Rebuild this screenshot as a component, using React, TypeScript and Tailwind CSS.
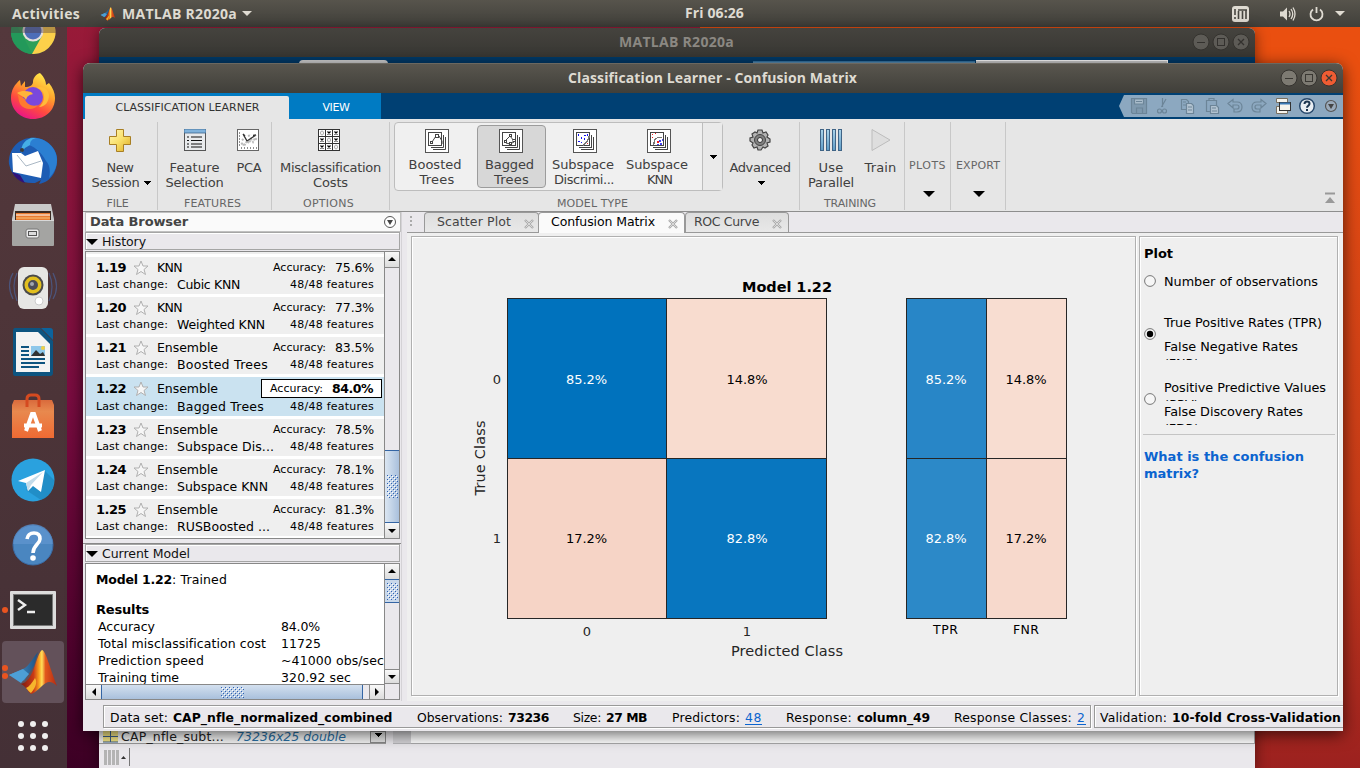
import React, { useLayoutEffect, useRef, useState } from "react";

/* Single-line label that tracks its letters so the run occupies w pixels. */
function T({ w, className = "", children }: { w: number; className?: string; children: string }) {
  const ref = useRef<HTMLSpanElement>(null);
  const [ls, setLs] = useState<number | null>(null);
  useLayoutEffect(() => {
    if (ref.current && ls === null) {
      setLs((w - ref.current.getBoundingClientRect().width) / children.length);
    }
  }, [w, children, ls]);
  return (
    <span ref={ref} className={`inline-block shrink-0 whitespace-pre ${className}`} style={{ letterSpacing: ls === null ? undefined : `${ls}px` }}>
      {children}
    </span>
  );
}

function Caret({ className = "" }: { className?: string }) {
  return (
    <svg className={className} width="8" height="4" viewBox="0 0 8 4" shapeRendering="crispEdges">
      <path d="M0 0h8L4 4z" fill="#000" />
    </svg>
  );
}

function BigCaret() {
  return (
    <svg width="12" height="6" viewBox="0 0 12 6">
      <path d="M0 0h12L6 6z" fill="#000" />
    </svg>
  );
}

function MatlabLogo({ className }: { className: string }) {
  return (
    <svg className={className} viewBox="0 0 48 46">
      <defs>
        <linearGradient id="mlb" x1="0" y1="0" x2="1" y2="0">
          <stop offset="0" stopColor="#4aa3dc" />
          <stop offset="1" stopColor="#1f4f80" />
        </linearGradient>
        <linearGradient id="mlo" x1="0" y1="0" x2="1" y2="0">
          <stop offset="0" stopColor="#7d1a10" />
          <stop offset=".35" stopColor="#c93a16" />
          <stop offset=".5" stopColor="#f9a01e" />
          <stop offset=".58" stopColor="#ffe05a" />
          <stop offset=".68" stopColor="#e2581c" />
          <stop offset="1" stopColor="#b12a14" />
        </linearGradient>
      </defs>
      <path d="M0 26 14 20c3-1 6-5 9-9 2-3 4-6 6-8l-4 14-10 15-3-3z" fill="url(#mlb)" />
      <path d="M0 26 14 20l6 5-8 9z" fill="#4d9fd6" />
      <path d="M12 35c6-1 10-8 13-16 3-8 5-16 8-18 4 1 7 16 15 36-4-4-8-5-11-3-5 3-10 10-15 11-3-2-5-8-10-10z" fill="url(#mlo)" />
      <path d="M17 39c3-1 6-5 9-10 2 3 2 8-4 15-2-1-3-3-5-5z" fill="#f6b52c" />
    </svg>
  );
}

/* ---------- Launcher ---------- */

function Dock() {
  return (
    <div className="flex h-[741px] w-[67px] flex-col items-center overflow-hidden bg-gradient-to-b from-[#54383c] via-[#4c3438] to-[#443036] pr-[2px]">
      <div className="-mt-[18px] h-[45px] w-[46px] shrink-0">
        <svg width="46" height="46" viewBox="0 0 46 46">
          <circle cx="23" cy="23" r="22" fill="#2c9f59" />
          <path d="M23 23 4 12a22 22 0 0 1 38 0z" fill="#b8403c" />
          <path d="M28 13h15A22 22 0 0 1 22 45l10-18z" fill="#fcd04a" />
          <path d="M4 12l10 17 8 16A22 22 0 0 1 4 12z" fill="#23995a" />
          <circle cx="23" cy="22" r="10.500" fill="#e6e0dc" />
          <circle cx="23" cy="22" r="8.500" fill="#4d6eb8" />
          <rect y="18" width="46" height="6" fill="#50383b" opacity=".4" />
        </svg>
      </div>
      <svg className="mt-[18px] shrink-0" width="46" height="48" viewBox="0 0 46 48">
        <defs>
          <linearGradient id="ffx" x1=".8" y1="0" x2=".3" y2="1">
            <stop offset="0" stopColor="#fff34f" />
            <stop offset=".4" stopColor="#ffa02c" />
            <stop offset=".7" stopColor="#ff4a40" />
            <stop offset="1" stopColor="#e8128a" />
          </linearGradient>
        </defs>
        <path d="M30 1c5 5 6 9 6 12l3-2c4 5 6 10 6 15 0 12-9 21-22 21S1 37 1 26C1 18 5 12 10 8l1 6 4-5v6c5 0 8-2 8-5 0-4 3-8 7-9z" fill="url(#ffx)" />
        <circle cx="23" cy="25" r="10" fill="#7a48dc" />
        <path d="M26 16c6 0 9 5 8 11-1 4-3 6-5 8 6 0 10-5 10-12-1-6-6-10-13-7z" fill="#ffc23a" opacity=".9" />
        <path d="M7 21c5-3 9-2 14-1l2 2c-4 1-6 2-7 6-1-3-5-4-9-7z" fill="#ffb43a" />
        <path d="M7 21c2 3 5 4 8 6 1 5 7 8 13 6-4 6-14 5-18-1-2-4-1-8-3-11z" fill="#ff7a2e" />
      </svg>
      <svg className="mt-[16px] shrink-0" width="50" height="50" viewBox="0 0 50 50">
        <path d="M1 28C0 15 9 3 22 2c13-2 25 7 27 19 1 14-6 25-18 27l2-4-6 3C14 48 4 42 1 28z" fill="#1e5db4" />
        <path d="M22 2c14-2 27 9 27 22 0 8-4 14-8 18 2-8 0-14-3-17C33 15 25 10 18 8z" fill="#2b7fd2" />
        <path d="M13 17C13 8 18 1 28 2c-4 1-6 3-6 7l-5 3z" fill="#45aee6" />
        <path d="m4 17 9 0 4 3 13-5 5 12-2 15L5 36z" fill="#fff" />
        <path d="m9 19 9 11 15-5" fill="none" stroke="#a9b7c4" strokeWidth="1" />
        <path d="M4 36c3 6 7 9 13 11l-5-8z" fill="#31127a" />
        <circle cx="14" cy="14" r="2" fill="#3b3b3b" />
      </svg>
      <svg className="mt-[16px] shrink-0" width="44" height="46" viewBox="0 0 44 46">
        <path d="M4 2h36l3 15v26H1V17z" fill="#c9c9c9" />
        <rect x="4" y="9" width="36" height="10" fill="#3a2a22" />
        <rect x="5" y="11" width="34" height="8" fill="#e87a30" />
        <path d="M5 13h34" stroke="#fff" />
        <path d="M5 16h34" stroke="#f7c37a" />
        <rect x="1" y="18" width="42" height="26" rx="1" fill="#a4a4a2" />
        <rect x="1" y="18" width="42" height="1" fill="#d8d8d8" />
        <rect x="15" y="27" width="13" height="9" rx="2" fill="#ececec" stroke="#777" />
        <rect x="17.500" y="29.500" width="8" height="4" fill="#ddd" stroke="#555" />
      </svg>
      <svg className="mt-[17px] shrink-0" width="50" height="46" viewBox="0 0 50 46">
        <g fill="none" stroke="#4b5d8c" strokeWidth="1.200" opacity=".8">
          <path d="M9 8Q3 20 9 36M5 8Q-2 20 5 34M41 8q6 14 0 28M45 8q7 14 0 26" />
        </g>
        <rect x="10" y="2" width="30" height="42" rx="6" fill="#e6e6e4" />
        <circle cx="25" cy="20" r="10.500" fill="#4a4a4a" />
        <circle cx="25" cy="20" r="8.500" fill="#e2bf1e" />
        <circle cx="25" cy="20" r="5" fill="#4d4d58" />
        <circle cx="24" cy="19" r="2" fill="#a2a7b0" />
        <circle cx="31" cy="36" r="4" fill="#fff" stroke="#ccc" />
      </svg>
      <svg className="mt-[16px] shrink-0" width="42" height="50" viewBox="0 0 42 50">
        <path d="M3 1h25l13 13v32q0 3-3 3H3q-2 0-2-3V4q0-3 2-3z" fill="#0d5480" />
        <path d="M29 1h9q3 0 3 3v9z" fill="#0c639c" />
        <path d="M4 5h22l12 12v28H4z" fill="#f3f3f3" />
        <path d="M9 20h8M9 24h8M9 28h8M9 32h24M9 36h24M9 40h18" stroke="#0d5480" strokeWidth="2" />
        <rect x="19" y="19" width="14" height="10" fill="#8ec7ea" />
        <path d="m19 29 5-6 4 4 3-2 2 4z" fill="#333" />
        <circle cx="31" cy="21" r="2" fill="#f0cf46" />
      </svg>
      <svg className="mt-[16px] shrink-0" width="44" height="46" viewBox="0 0 44 46">
        <defs>
          <linearGradient id="bag" x1="0" y1="0" x2="0" y2="1">
            <stop offset="0" stopColor="#d96a3c" />
            <stop offset=".3" stopColor="#e8894e" />
            <stop offset="1" stopColor="#ef6a33" />
          </linearGradient>
        </defs>
        <path d="M3 7h38l2 5v33H1V12z" fill="url(#bag)" />
        <path d="M16 14V6q0-4 4-4h4q4 0 4 4v8" fill="none" stroke="#d54a20" strokeWidth="3" />
        <path d="m15 38 6-17h2l6 17M13 32.500h18" fill="none" stroke="#fff" strokeWidth="4" />
      </svg>
      <svg className="mt-[19px] shrink-0" width="44" height="44" viewBox="0 0 44 44">
        <circle cx="22" cy="22" r="21.500" fill="#2aa1de" />
        <path d="M33 12 43 22q0 15-13 20L15 32z" fill="#1d82b8" opacity=".6" />
        <path d="m7 23 27-11-4 22-8-6-5 5-2-8z" fill="#fff" />
        <path d="m15 25 17-11-12 13-3 6z" fill="#c4dcea" />
      </svg>
      <svg className="mt-[22px] shrink-0" width="42" height="42" viewBox="0 0 42 42">
        <circle cx="21" cy="21" r="20" fill="#4a86c0" stroke="#3a6ba5" />
        <path d="M1 20a20 20 0 0 1 40 0z" fill="#6a9cd6" opacity=".5" />
        <path d="M15 15q1-6 7-6t6 6c0 5-7 6-7 14" fill="none" stroke="#fff" strokeWidth="3.600" />
        <circle cx="21" cy="34" r="2.800" fill="#fff" />
      </svg>
      <div className="mt-[25px] flex w-full shrink-0 items-center">
        <span className="ml-[2px] mr-[3px] h-[6px] w-[6px] rounded-full bg-[#e95420]" />
        <svg width="46" height="38" viewBox="0 0 46 38" className="ml-[-1px]">
          <rect width="46" height="38" rx="1" fill="#dcdcdc" />
          <rect x="3" y="3" width="40" height="32" fill="#787878" />
          <rect x="4" y="4" width="38" height="30" fill="#2b2b2b" />
          <path d="m8 9 7 5-7 5M17 21h8" fill="none" stroke="#eee" strokeWidth="2.400" />
        </svg>
      </div>
      <div className="mt-[12px] flex h-[62px] w-[62px] shrink-0 items-center rounded bg-[#63515a]">
        <div className="flex flex-col gap-[2px]">
          <span className="h-[6px] w-[6px] rounded-full bg-[#e95420]" />
          <span className="h-[6px] w-[6px] rounded-full bg-[#e95420]" />
        </div>
        <MatlabLogo className="ml-px h-[46px] w-[48px]" />
      </div>
      <div className="mt-[18px] grid shrink-0 grid-cols-3 gap-[6px]">
        {[0, 1, 2, 3, 4, 5, 6, 7, 8].map((i) => (
          <span key={i} className="h-[6px] w-[6px] rounded-full bg-[#f0eeee]" />
        ))}
      </div>
    </div>
  );
}

/* ---------- Window chrome ---------- */

function WinButtons({ active }: { active?: boolean }) {
  const face = active ? "#7d7a72" : "#5d5b56";
  const ink = active ? "#3a3833" : "#33312e";
  return (
    <svg width="58" height="18" viewBox="0 0 58 18">
      <circle cx="9" cy="9" r="8" fill={face} stroke="#35332f" />
      <path d="M5 9.500h8" stroke={ink} />
      <circle cx="29" cy="9" r="8" fill={face} stroke="#35332f" />
      <rect x="25.500" y="5.500" width="7" height="7" fill="none" stroke={ink} />
      <circle cx="49" cy="9" r="8" fill={active ? "#ee5c33" : face} stroke="#35332f" />
      <path d="m46 6 6 6M52 6l-6 6" stroke={ink} strokeWidth="1.300" />
    </svg>
  );
}

function TopBar() {
  return (
    <div className="flex h-[27px] items-center bg-gradient-to-b from-[#57544c] to-[#403f3a] font-['Open_Sans','Noto_Sans',sans-serif] text-[14px] font-bold text-[#dfdbd2]">
      <T w={68} className="ml-[12px]">Activities</T>
      <MatlabLogo className="ml-[20px] h-[14px] w-[16px]" />
      <T w={115} className="ml-[6px]">MATLAB R2020a</T>
      <svg className="ml-[5px]" width="10" height="5" viewBox="0 0 10 5"><path d="M0 0h10L5 5z" fill="#dfdbd2" /></svg>
      <T w={59} className="mb-[2px] ml-[433px]">Fri 06:26</T>
      <div className="ml-auto flex items-center pr-[15px]">
        <svg width="17" height="16" viewBox="0 0 17 16">
          <rect width="17" height="16" rx="3" fill="#dfdbd2" />
          <path d="M3 3v6M3 11v2M6.500 13V5M6 4h9M10.500 5v8M14 4v9" stroke="#47453f" strokeWidth="1.600" fill="none" />
        </svg>
        <svg className="ml-[30px]" width="17" height="16" viewBox="0 0 17 16">
          <path d="M1 5.500h3l4-4v13l-4-4H1z" fill="#dfdbd2" />
          <path d="M10 5q2 3 0 6M12 3q3.500 5 0 10M14 1.500q4 6.500 0 13" stroke="#dfdbd2" strokeWidth="1.300" fill="none" />
        </svg>
        <svg className="ml-[13px]" width="15" height="16" viewBox="0 0 15 16">
          <path d="M4 3.500a6 6 0 1 0 7 0M7.500 1v6" stroke="#dfdbd2" strokeWidth="1.800" fill="none" />
        </svg>
        <svg className="ml-[11px]" width="10" height="5" viewBox="0 0 10 5"><path d="M0 0h10L5 5z" fill="#dfdbd2" /></svg>
      </div>
    </div>
  );
}

function BackWindow() {
  return (
    <div className="absolute left-[99px] top-[28px] flex h-[740px] w-[1156px] flex-col overflow-hidden rounded-t-[6px] bg-[#eae8ec] shadow-[0_2px_14px_rgba(0,0,0,.5)]">
      <div className="flex h-[29px] items-center bg-gradient-to-b from-[#45433e] to-[#383733] pb-[2px] font-['Open_Sans','Noto_Sans',sans-serif] text-[14px] font-bold text-[#8b8882]">
        <T w={115} className="ml-[520px]">MATLAB R2020a</T>
        <div className="ml-auto pr-[5px]"><WinButtons /></div>
      </div>
      <div className="flex h-[7px] items-end bg-[#003a69]">
        <div className="ml-[200px] h-[4px] w-[89px] rounded-t-sm bg-[#d4d4d4]" />
        <div className="ml-[365px] h-[3px] w-[222px] border-t border-[#3576a5] bg-[#5e90b5]" />
        <div className="ml-[1px] h-[4px] w-[192px] border-t border-r border-white bg-[#d0d0d0]" />
      </div>
      <div className="mt-[667px] flex h-[13px]">
        <div className="flex h-[13px] w-[287px] items-start border-b border-[#999] bg-[#f4f4f4] font-['DejaVu_Sans',sans-serif] text-[12.500px] leading-[11px]">
          <svg className="ml-[4px]" width="15" height="12" viewBox="0 0 15 12"><rect width="15" height="11" fill="#f4e586" /><path d="M0 5.500h15M7.500 0v11M0 11h15" stroke="#3c5f88" /></svg>
          <T w={103} className="ml-[3px] text-[#222]">CAP_nfle_subt...</T>
          <T w={110} className="ml-[12px] italic text-[#2a70a5]">73236x25 double</T>
          <div className="ml-auto flex h-[12px] w-[16px] justify-center border border-[#888] bg-[#e4e4e4]"><Caret className="mt-[1px]" /></div>
        </div>
        <div className="ml-[7px] h-[13px] w-[18px] border-b border-[#b5b5b8] bg-[#d5d4d7]" />
        <div className="h-[13px] grow border-b border-r border-[#a9a9ab] bg-white" />
      </div>
      <div className="mt-[3px] flex h-[20px] items-center">
        <svg className="ml-[5px]" width="24" height="15" viewBox="0 0 24 15"><path d="M1.500 0v15M5.500 0v15M9.500 0v15M13.500 0v15" stroke="#b4b4b4" strokeWidth="3" /><path d="M17 9h5l-2.500-3z" fill="#333" /></svg>
        <div className="ml-[1px] h-[18px] w-px bg-[#777]" />
      </div>
    </div>
  );
}

/* ---------- Toolstrip ---------- */

function Lines({ rows, className = "" }: { rows: [string, number][]; className?: string }) {
  return (
    <div className={`flex flex-col items-center text-[13px] leading-[15px] text-[#404040] ${className}`}>
      {rows.map(([t, w]) => (
        <T key={t} w={w}>{t}</T>
      ))}
    </div>
  );
}

function Section({ label, lw, className, children }: { label: string; lw: number; className: string; children: React.ReactNode }) {
  return (
    <div className={`mt-[3px] flex h-[88px] shrink-0 flex-col border-r border-[#c8c8c8] ${className}`}>
      <div className="flex h-[75px]">{children}</div>
      <div className="flex justify-center text-[11px] leading-[13px] text-[#666]"><T w={lw}>{label}</T></div>
    </div>
  );
}

function ModelIcon({ kind }: { kind: number }) {
  return (
    <svg width="24" height="24" viewBox="0 0 24 24" shapeRendering={kind < 2 ? "auto" : "crispEdges"}>
      <rect x=".5" y=".5" width="23" height="23" fill="#fff" stroke="#555" />
      <path d="M8 20.500h12.500V8M6 18.500h12.500V6" fill="none" stroke="#444" />
      <rect x="3.500" y="3.500" width="13" height="13" fill="#fff" stroke="#444" />
      {kind === 0 && (
        <g fill="#fff" stroke="#444"><path d="M7 13l4-6h3l3 5v3" fill="none" /><rect x="5.500" y="12.500" width="2" height="2" /><rect x="10.500" y="5.500" width="3" height="3" /></g>
      )}
      {kind === 1 && (
        <g fill="#fff" stroke="#444"><path d="m6 12 5-5 4 5M7 14l4 1 4-2" fill="none" /><rect x="5.500" y="11.500" width="2" height="2" /><rect x="10.500" y="5.500" width="2" height="2" /><rect x="14" y="10.500" width="2" height="2" /><rect x="10.500" y="13.500" width="2" height="2" /></g>
      )}
      {kind === 2 && (
        <g fill="#1414f0"><path d="M5 5h1v2H5zM11 6h2v1h-2zM8 8h1v2H8zM11 9h1v2h-1zM14 5h1v2h-1zM5 12h2v1H5zM8 13h1v1H8z" /><path d="M10 16q6-4 6-9" fill="none" stroke="#777" strokeWidth="1.500" /><path d="M14 14h1v1h-1z" fill="#e33" /></g>
      )}
      {kind === 3 && (
        <g fill="#e22"><path d="M5 5h1v1H5zM8 4h1v1H8zM5 8h1v1H5zM10 12h2v2h-2z" /><path d="M7 16q-1-8 8-8" fill="none" stroke="#777" /><path d="M12 11h2v2h-2zM13 14h2v2h-2zM10 15h2v1h-2zM15 10h1v2h-1z" fill="#4444f0" /></g>
      )}
    </svg>
  );
}

function GalleryItem({ kind, rows, selected, className }: { kind: number; rows: [string, number][]; selected?: boolean; className: string }) {
  return (
    <div className={`flex h-[63px] shrink-0 flex-col items-center rounded-[4px] border pt-[3px] ${selected ? "border-[#9c9c9c] bg-[#d7d7d7]" : "border-transparent"} ${className}`}>
      <div className={`h-[29px] ${kind < 2 ? "mr-[1px]" : "mr-[-1px]"}`}><ModelIcon kind={kind} /></div>
      <Lines rows={rows} className={kind < 2 ? "[&>span:first-child]:mr-[4px]" : kind === 2 ? "[&>span:first-child]:mr-[2px]" : "[&>span:first-child]:mr-[2px] [&>span:last-child]:ml-[3px]"} />
    </div>
  );
}

function Toolstrip() {
  return (
    <div className="flex h-[92px] bg-[#e6e6e6]">
      <Section label="FILE" lw={22} className="w-[75px] [&>div:last-child]:pr-[5px]">
        <div className="flex w-full flex-col items-center pt-[7px]">
          <svg width="24" height="24" viewBox="0 0 24 24">
            <defs><linearGradient id="plus" x1="0" y1="0" x2="1" y2="1"><stop offset="0" stopColor="#fff7b8" /><stop offset=".5" stopColor="#f9e06a" /><stop offset="1" stopColor="#dca822" /></linearGradient></defs>
            <path d="M8.500 .5h7v7h7v8h-7v7h-7v-7h-7v-8h7z" fill="url(#plus)" stroke="#a87f24" />
          </svg>
          <Lines className="mt-[7px]" rows={[["New", 27]]} />
          <div className="flex items-center pl-[2px]"><Lines rows={[["Session", 48]]} /><Caret className="ml-[3px]" /></div>
        </div>
      </Section>
      <Section label="FEATURES" lw={57} className="w-[114px] [&>div:last-child]:pr-[4px]">
        <div className="flex w-[73px] flex-col items-center pt-[7px]">
          <svg width="22" height="24" viewBox="0 0 22 24">
            <rect x=".5" y=".5" width="21" height="21" fill="#e8eaec" stroke="#555" />
            <rect x="0" y="0" width="22" height="4" fill="#7fb2dc" stroke="#3c648c" strokeWidth=".8" />
            <path d="M3 8h2M3 11.500h2M3 15h2M3 18h2M7 8h11M7 11.500h11M7 15h11M7 18h11" stroke="#111" strokeWidth="1.200" />
          </svg>
          <Lines className="mt-[7px]" rows={[["Feature", 50], ["Selection", 58]]} />
        </div>
        <div className="flex w-[36px] flex-col items-center pt-[7px]">
          <svg className="mr-[2px]" width="24" height="24" viewBox="0 0 24 24">
            <rect x="1.500" y=".5" width="21" height="21" fill="#fff" stroke="#666" />
            <path d="M3 4h1M3 7h1M3 10h1M3 13h1M3 16h1M5 19h1M8 19h1M11 19h1M14 19h1M17 19h1M20 19h1" stroke="#222" strokeWidth="1.200" />
            <path d="m5 15 2-1 1 3 3-5 2 2 2-4 2 3 2-4 2 2M6 10l2 2M12 7l3-1" stroke="#bbb" strokeWidth="2" strokeDasharray="2 1" fill="none" />
            <path d="M11 12 7 5M11 12l9-6M7 5l2 2M20 6l-3 .5" stroke="#333" strokeWidth="1.400" fill="none" />
          </svg>
          <Lines className="mt-[7px]" rows={[["PCA", 25]]} />
        </div>
      </Section>
      <Section label="OPTIONS" lw={51} className="w-[118px] [&>div:last-child]:pr-[4px]">
        <div className="flex w-full flex-col items-center pt-[7px]">
          <svg className="mr-[3px]" width="24" height="24" viewBox="0 0 24 24" shapeRendering="crispEdges">
            <rect x="1" y="0" width="22" height="22" fill="#fff" />
            <path d="M1.500 0v22M8.500 0v22M15.500 0v22M22.500 0v22M1 .5h22M1 7.500h22M1 14.500h22M1 21.500h22" stroke="#333" />
            <path d="m10.500 2.500 3 3m0-3-3 3m7-3 3 3m0-3-3 3M3.500 9.500l3 3m0-3-3 3m14-3 3 3m0-3-3 3M3.500 16.500l3 3m0-3-3 3m7-3 3 3m0-3-3 3" stroke="#000" strokeWidth="1.200" shapeRendering="auto" />
            <g fill="none" stroke="#aaa" shapeRendering="auto"><ellipse cx="5" cy="4" rx="1.500" ry="2" /><ellipse cx="12" cy="11" rx="1.500" ry="2" /><ellipse cx="19" cy="18" rx="1.500" ry="2" /></g>
          </svg>
          <Lines className="mt-[7px]" rows={[["Misclassification", 101], ["Costs", 35]]} />
        </div>
      </Section>
      <Section label="MODEL TYPE" lw={71} className="w-[410px] [&>div:last-child]:pr-[4px]">
        <div className="ml-[4px] flex h-[69px] w-[329px] rounded-[4px] border border-[#bdbdbd] bg-[#f0f0f0] pt-[2px]">
          <GalleryItem className="ml-[6px] w-[72px]" kind={0} rows={[["Boosted", 53], ["Trees", 35]]} />
          <GalleryItem className="ml-[4px] w-[69px]" kind={1} selected rows={[["Bagged", 49], ["Trees", 35]]} />
          <GalleryItem className="ml-[1px] w-[74px]" kind={2} rows={[["Subspace", 62], ["Discrimi...", 60]]} />
          <GalleryItem className="w-[74px]" kind={3} rows={[["Subspace", 62], ["KNN", 25]]} />
          <div className="-mt-[2px] ml-auto flex w-[20px] items-center justify-center border-l border-[#bdbdbd] bg-[#eaeaea]"><Caret /></div>
        </div>
        <div className="flex w-[74px] flex-col items-center pt-[7px]">
          <svg width="22" height="24" viewBox="0 0 22 24">
            <path d="M9 1h4l1 3 3-1 2 3-1 2 3 2v3l-3 1 1 3-3 2-2-1-2 3H9l-1-3-3 1-2-3 1-2-3-2V9l3-1-1-3 3-2 2 1z" fill="#b2b2b2" stroke="#444" strokeWidth="1.200" />
            <circle cx="11" cy="11" r="5.500" fill="#808080" stroke="#444" />
            <circle cx="11" cy="11" r="2.500" fill="#eee" stroke="#333" />
          </svg>
          <Lines className="mt-[7px]" rows={[["Advanced", 61]]} />
          <Caret className="ml-[2px] mt-[6px]" />
        </div>
      </Section>
      <Section label="TRAINING" lw={52} className="w-[105px] [&>div:last-child]:pr-[4px]">
        <div className="flex w-[62px] flex-col items-center pt-[7px]">
          <svg width="24" height="24" viewBox="0 0 24 24">
            <defs><linearGradient id="bars" x1="0" y1="0" x2="0" y2="1"><stop offset="0" stopColor="#a9d3ea" /><stop offset="1" stopColor="#5f9cc6" /></linearGradient></defs>
            <g fill="url(#bars)" stroke="#3f6486"><rect x="1.500" y=".5" width="3" height="21" /><rect x="7.500" y=".5" width="3" height="21" /><rect x="13.500" y=".5" width="3" height="21" /><rect x="19.500" y=".5" width="3" height="21" /></g>
          </svg>
          <Lines className="mt-[7px]" rows={[["Use", 25], ["Parallel", 46]]} />
        </div>
        <div className="flex w-[37px] flex-col items-center pt-[7px]">
          <svg width="24" height="24" viewBox="0 0 24 24"><path d="M3 .5v21l18-10.500z" fill="#dedede" stroke="#bcbcbc" /></svg>
          <Lines className="mt-[7px]" rows={[["Train", 32]]} />
        </div>
      </Section>
      {([["PLOTS", 37, "w-[46px]"], ["EXPORT", 44, "w-[55px]"]] as [string, number, string][]).map(([t, w, c]) => (
        <div key={t} className={`mt-[3px] flex h-[88px] flex-col items-center border-r border-[#c8c8c8] pt-[37px] text-[11px] leading-[13px] text-[#666] ${c}`}>
          <T w={w}>{t}</T>
          <div className="ml-[2px] mt-[19px]"><BigCaret /></div>
        </div>
      ))}
      <svg className="ml-auto mr-[7px] mt-[73px]" width="12" height="12" viewBox="0 0 12 12"><path d="M1 1.500h10" stroke="#999" strokeWidth="2" /><path d="M1 11h10L6 5z" fill="#999" /></svg>
    </div>
  );
}

function TabStrip() {
  return (
    <div className="flex h-[26px] bg-[#004073] text-[11px]">
      <div className="flex w-[298px] items-end bg-[#007bc3] pl-[2px]">
        <div className="flex h-[23px] w-[204px] items-center justify-center rounded-t-[2px] bg-[#e6e6e6] pt-[2px] text-[#333]"><T w={144} className="ml-px">CLASSIFICATION LEARNER</T></div>
        <div className="flex h-[23px] grow items-center justify-center pt-[2px] text-white"><T w={27} className="ml-[2px]">VIEW</T></div>
      </div>
      <svg className="ml-auto mt-[2px]" width="224" height="22" viewBox="0 0 224 22">
        <path d="M0 11 5 0h219v22H5z" fill="#8ca8c0" />
        <g fill="none" stroke="#6c8598" strokeWidth="1.200">
          <path d="M12.500 3.500h15v15h-14l-1-1z" fill="#7f99ae" />
          <path d="M15.500 4h9v5h-9z" fill="#a9bccb" />
          <path d="M17.500 18v-5h6v5M17 6.500h6" />
          <path d="M42.500 12 47 4M43.500 3v9" /><circle cx="40.500" cy="16" r="2" /><circle cx="45.500" cy="16" r="2" />
          <path d="M62.500 4.500h5l2 2v8h-7zM64 7h3M64 10h3" /><path d="M67.500 8.500h5l2 2v8h-7zM69 12h4M69 15h4" fill="#b2c3d1" />
          <path d="M87.500 5.500h10v11h-10zM90 5V3.500h5V5" /><path d="M91.500 10.500h6l2 2v6h-8zM93 13h4M93 16h5" fill="#b2c3d1" />
          <path d="m109 8.500 5-4v2.500h4q5 0 5 5t-5 5h-3v-3h3q2 0 2-2t-2-2h-4V13z" />
          <path d="m147 8.500-5-4v2.500h-4q-5 0-5 5t5 5h3v-3h-3q-2 0-2-2t2-2h4V13z" />
        </g>
        <g stroke="#333" fill="#f5f3ec">
          <path d="M157.500 3.500h11v4h-11zM157.500 11.500h11v7h-11z" stroke="#776f60" />
          <rect x="160.500" y="7.500" width="11" height="8" /><path d="M161 8.500h10" stroke="#3b7ab5" strokeWidth="2" />
        </g>
        <circle cx="188" cy="11" r="7.300" fill="#e9eef3" stroke="#28496c" strokeWidth="1.500" />
        <path d="M185.500 9q0-2.500 2.500-2.500t2.500 2.300c0 2-2.500 2-2.500 4M188 14v2" fill="none" stroke="#1d3650" strokeWidth="2" />
        <circle cx="212" cy="11" r="5.500" fill="#9aaaba" stroke="#555" strokeWidth="1.200" />
        <path d="M209 9h6l-3 5z" fill="#444" />
      </svg>
    </div>
  );
}

/* ---------- Data browser ---------- */

const history: { id: string; kind: string; kw: number; acc: string; name: string; nw: number; on?: boolean }[] = [
  { id: "1.19", kind: "KNN", kw: 25, acc: "75.6%", name: "Cubic KNN", nw: 63 },
  { id: "1.20", kind: "KNN", kw: 25, acc: "77.3%", name: "Weighted KNN", nw: 88 },
  { id: "1.21", kind: "Ensemble", kw: 61, acc: "83.5%", name: "Boosted Trees", nw: 91 },
  { id: "1.22", kind: "Ensemble", kw: 61, acc: "84.0%", name: "Bagged Trees", nw: 87, on: true },
  { id: "1.23", kind: "Ensemble", kw: 61, acc: "78.5%", name: "Subspace Dis...", nw: 97 },
  { id: "1.24", kind: "Ensemble", kw: 61, acc: "78.1%", name: "Subspace KNN", nw: 91 },
  { id: "1.25", kind: "Ensemble", kw: 61, acc: "81.3%", name: "RUSBoosted ...", nw: 93 },
];

function HistoryRow({ r }: { r: (typeof history)[number] }) {
  return (
    <div className={`mb-[3px] shrink-0 pl-[10px] text-black ${r.on ? "h-[39px] bg-[#cae2f0] pt-[2px]" : "h-[37px] bg-[#efefef] pt-[1px]"}`}>
      <div className={`flex items-center text-[12.500px] ${r.on ? "h-[20px] pb-px" : "h-[19px]"}`}>
        <T w={30} className="text-[13px] font-bold">{r.id}</T>
        <svg className="ml-[7px]" width="16" height="16" viewBox="0 0 16 16"><path d="m8 1 2 5h5l-4 3.500 1.500 5L8 11.500l-4.500 3 1.500-5L1 6h5z" fill="#f6f6f6" stroke="#b0b0b0" /></svg>
        <T w={r.kw} className="ml-[8px] mt-[2px]">{r.kind}</T>
        {r.on ? (
          <div className="ml-auto mr-[2px] flex h-[19px] w-[121px] items-center border border-black bg-white pl-[8px]">
            <T w={53} className="mt-px text-[11px]">Accuracy:</T>
            <T w={41} className="ml-[9px] mt-px text-[12.500px] font-bold">{r.acc}</T>
          </div>
        ) : (
          <>
            <T w={53} className="ml-auto mt-[2px] text-[11px]">Accuracy:</T>
            <T w={39} className="ml-[9px] mr-[10px] mt-[2px]">{r.acc}</T>
          </>
        )}
      </div>
      <div className="flex h-[15px] items-center text-[11px]">
        <T w={72} className="mt-[2px]">Last change:</T>
        <T w={r.nw} className="ml-[9px] mt-[2px] text-[12.500px]">{r.name}</T>
        <T w={84} className="ml-auto mr-[10px] mt-[2px]">48/48 features</T>
      </div>
    </div>
  );
}

function Arrow({ dir, className }: { dir: "u" | "d" | "l" | "r"; className: string }) {
  const d = { u: "M1 6h8L5 2z", d: "M1 3h8L5 7z", l: "M7 1v8L3 5z", r: "M3 1v8l4-4z" }[dir];
  return (
    <div className={`flex shrink-0 items-center justify-center border-[#888] bg-gradient-to-b from-[#f8f8f8] to-[#dcdcdc] ${className}`}>
      <svg width="10" height="10" viewBox="0 0 10 10"><path d={d} /></svg>
    </div>
  );
}

function Grip({ w, h }: { w: number; h: number }) {
  return (
    <svg width={w} height={h} shapeRendering="crispEdges">
      <defs><pattern id="grip" width="4" height="4" patternUnits="userSpaceOnUse"><path d="M0 0h1v1H0zM2 2h1v1H2z" fill="#2f62b4" /><path d="M1 1h1v1H1zM3 3h1v1H3z" fill="#fff" /></pattern></defs>
      <rect width={w} height={h} fill="url(#grip)" />
    </svg>
  );
}

function SectionBar({ label, w }: { label: string; w: number }) {
  return (
    <div className="ml-[2px] flex h-[18px] w-[315px] shrink-0 items-center border border-[#a5a5a5] bg-[#eae8ec] pt-px text-[12.500px] text-[#111] shadow-[inset_1px_1px_0_#fff]">
      <BigCaret />
      <T w={w} className="ml-[4px] mt-[2px]">{label}</T>
    </div>
  );
}

function DataBrowser() {
  return (
    <div className="flex w-[319px] shrink-0 flex-col border-r border-[#d4d2d6] bg-[#eae8ec]">
      <div className="ml-[2px] flex h-[20px] shrink-0 items-center border border-[#c0c0c0] bg-[#fafafa] text-[13px] font-bold text-[#444]">
        <T w={98} className="ml-[4px]">Data Browser</T>
        <svg className="ml-auto mr-[3px]" width="14" height="14" viewBox="0 0 14 14"><circle cx="7" cy="7" r="5.500" fill="#fff" stroke="#555" /><path d="M4 5h6L7 10z" fill="#444" /></svg>
      </div>
      <SectionBar label="History" w={44} />
      <div className="ml-[2px] mt-[1px] flex h-[288px] w-[315px] shrink-0 border border-[#888]">
        <div className="flex w-[299px] flex-col overflow-hidden bg-white">
          <div className="mb-[3px] h-[2px] shrink-0 bg-[#efefef]" />
          {history.map((r) => (<HistoryRow key={r.id} r={r} />))}
        </div>
        <div className="flex w-[15px] flex-col border-l border-[#888]">
          <Arrow dir="u" className="h-[16px] border-b" />
          <div className="grow" />
          <div className="flex h-[73px] items-center justify-center border-y border-[#3465a4] bg-gradient-to-r from-[#dbe6f2] to-[#a9c0dc]"><Grip w={11} h={23} /></div>
          <Arrow dir="d" className="h-[15px]" />
        </div>
      </div>
      <div className="mt-[4px] h-px shrink-0 bg-[#888]" />
      <SectionBar label="Current Model" w={88} />
      <div className="ml-[2px] mt-[1px] flex h-[137px] w-[315px] shrink-0 flex-col border border-[#888]">
        <div className="flex h-[120px]">
          <div className="w-[299px] overflow-hidden bg-white text-[12.500px] leading-[17px] text-black">
            <div className="flex pl-[10px] pt-[7px]"><T w={76} className="font-bold">Model 1.22</T><T w={55}>: Trained</T></div>
            <div className="mt-[13px] pl-[10px]"><T w={53} className="text-[13px] font-bold">Results</T></div>
            <div className="grid grid-cols-[183px_1fr] pl-[12px]">
              <T w={57} className="justify-self-start">Accuracy</T><T w={39} className="justify-self-start">84.0%</T>
              <T w={168} className="justify-self-start">Total misclassification cost</T><T w={40} className="justify-self-start">11725</T>
              <T w={106} className="justify-self-start">Prediction speed</T><T w={103} className="justify-self-start">~41000 obs/sec</T>
              <T w={81} className="justify-self-start">Training time</T><T w={70} className="justify-self-start">320.92 sec</T>
            </div>
          </div>
          <div className="flex w-[15px] flex-col border-l border-[#888]">
            <Arrow dir="u" className="h-[15px]" />
            <div className="flex h-[24px] items-center justify-center border-y border-[#3465a4] bg-[#c9d8ea]"><Grip w={11} h={17} /></div>
            <div className="grow" />
            <Arrow dir="d" className="h-[15px] border-y" />
          </div>
        </div>
        <div className="flex h-[15px] w-[299px] border-r border-t border-[#888]">
          <Arrow dir="l" className="w-[15px]" />
          <div className="flex w-[262px] items-center justify-center border-x border-[#3465a4] bg-gradient-to-b from-[#d3e0ef] to-[#a9c0dc]"><Grip w={23} h={11} /></div>
          <div className="grow" />
          <Arrow dir="r" className="w-[15px] border-l" />
        </div>
      </div>
    </div>
  );
}

/* ---------- Documents ---------- */

function DocTab({ label, w, on, className }: { label: string; w: number; on?: boolean; className: string }) {
  return (
    <div className={`flex h-[20px] items-center rounded-t-[4px] border border-b-0 border-[#999] text-[12.500px] ${on ? "bg-[#fafafa] text-black" : "bg-gradient-to-b from-[#dedede] to-[#e8e8e8] text-[#444]"} ${className}`}>
      <T w={w} className={on ? "mb-[2px]" : ""}>{label}</T>
      <svg className={`ml-auto ${on ? "mt-px" : "mt-[2px]"}`} width="10" height="10" viewBox="0 0 10 10"><path d="m1 1 8 8M9 1 1 9" stroke="#aaa" strokeWidth="2.400" /><path d="m1.500 1.500 7 7M8.500 1.500l-7 7" stroke="#e4e4e4" strokeWidth=".8" /></svg>
    </div>
  );
}

function Chart() {
  return (
    <svg width="723" height="457" viewBox="412 237 723 457" fontFamily="'DejaVu Sans', sans-serif">
      <g stroke="#262626" shapeRendering="crispEdges">
        <rect x="507.500" y="298.500" width="159" height="160" fill="#0072bd" />
        <rect x="666.500" y="298.500" width="160" height="160" fill="#f8dccf" />
        <rect x="507.500" y="458.500" width="159" height="160" fill="#f6d4c6" />
        <rect x="666.500" y="458.500" width="160" height="160" fill="#0876bf" />
        <rect x="906.500" y="298.500" width="80" height="160" fill="#2886c7" />
        <rect x="986.500" y="298.500" width="80" height="160" fill="#f8ddd1" />
        <rect x="906.500" y="458.500" width="80" height="160" fill="#2c89c8" />
        <rect x="986.500" y="458.500" width="80" height="160" fill="#f7d9cc" />
      </g>
      <text x="787" y="292" textAnchor="middle" fontSize="14.500" fontWeight="bold" textLength="90">Model 1.22</text>
      <g fontSize="13" textAnchor="middle">
        <text x="586.500" y="384" fill="#fff" textLength="41">85.2%</text>
        <text x="747" y="384" textLength="41">14.8%</text>
        <text x="586.500" y="543" textLength="41">17.2%</text>
        <text x="747" y="543" fill="#fff" textLength="41">82.8%</text>
        <text x="946" y="384" fill="#fff" textLength="41">85.2%</text>
        <text x="1026" y="384" textLength="41">14.8%</text>
        <text x="946" y="543" fill="#fff" textLength="41">82.8%</text>
        <text x="1026" y="543" textLength="41">17.2%</text>
        <g fill="#262626">
          <text x="497" y="384">0</text>
          <text x="497" y="543">1</text>
          <text x="587" y="636">0</text>
          <text x="747" y="636">1</text>
        </g>
        <text x="945.500" y="634" fontSize="12.500" textLength="25">TPR</text>
        <text x="1026" y="634" fontSize="12.500" textLength="26">FNR</text>
      </g>
      <g fontSize="14.500" fill="#262626" textAnchor="middle">
        <text x="787" y="656" textLength="112">Predicted Class</text>
        <text transform="translate(485 458) rotate(-90)" textLength="75">True Class</text>
      </g>
    </svg>
  );
}

function Radio({ on }: { on?: boolean }) {
  return (
    <svg className="shrink-0" width="12" height="12" viewBox="0 0 12 12">
      <circle cx="6" cy="6" r="5.400" fill="#f6f6f6" stroke="#777" />
      {on && <circle cx="6" cy="6" r="3.200" />}
    </svg>
  );
}

function Clipped({ children, w }: { children: string; w: number }) {
  return (
    <div className="h-[5px] overflow-hidden leading-[17px]"><T w={w}>{children}</T></div>
  );
}

function PlotOptions() {
  return (
    <div className="flex h-[460px] w-[199px] flex-col border border-[#b0b0b0] pl-[4px] pt-[8px] text-[12.800px] leading-[17px] text-black shadow-[1px_1px_0_#fff,inset_1px_1px_0_#fff]">
      <T w={29} className="self-start text-[13px] font-bold">Plot</T>
      <div className="mt-[11px] flex items-center gap-[8px]"><div className="pb-[2px]"><Radio /></div><T w={154}>Number of observations</T></div>
      <div className="mt-[24px] flex h-[46px] items-center gap-[8px]">
        <div className="pb-[6px]"><Radio on /></div>
        <div className="flex flex-col items-start">
          <T w={158}>True Positive Rates (TPR)</T>
          <T w={134} className="mt-[7px]">False Negative Rates</T>
          <Clipped w={35}>(FNR)</Clipped>
        </div>
      </div>
      <div className="mt-[19px] flex h-[46px] items-center gap-[8px]">
        <div className="pb-[6px]"><Radio /></div>
        <div className="flex flex-col items-start">
          <T w={162}>Positive Predictive Values</T>
          <Clipped w={35}>(PPV)</Clipped>
          <T w={139} className="mt-[2px]">False Discovery Rates</T>
          <Clipped w={35}>(FDR)</Clipped>
        </div>
      </div>
      <div className="-ml-px mt-[9px] h-px w-[192px] shrink-0 bg-[#c4c4c4]" />
      <div className="mt-[13px] flex flex-col items-start text-[13px] font-bold text-[#0b64cf]">
        <T w={160}>What is the confusion</T>
        <T w={55}>matrix?</T>
      </div>
    </div>
  );
}

function Documents() {
  return (
    <div className="flex w-[936px] flex-col bg-[#efefef]">
      <div className="flex h-[21px] shrink-0 items-end border-b border-[#999] bg-[#eae8ec]">
        <svg className="ml-[2px] self-center" width="3" height="12" viewBox="0 0 3 12"><path d="M1 0h2v2H1zM1 4h2v2H1zM1 8h2v2H1z" fill="#aaa" /></svg>
        <DocTab className="ml-[12px] w-[115px] pl-[12px] pr-[4px]" label="Scatter Plot" w={74} />
        <DocTab className="-mb-px -ml-px h-[21px] w-[147px] pl-[12px] pr-[6px]" label="Confusion Matrix" w={104} on />
        <DocTab className="w-[104px] pl-[8px] pr-[6px]" label="ROC Curve" w={65} />
      </div>
      <div className="flex gap-[2px] pl-[4px] pt-[3px]">
        <div className="h-[460px] w-[725px] border border-[#b0b0b0] shadow-[1px_1px_0_#fff,inset_1px_1px_0_#fff]"><Chart /></div>
        <div className="ml-px"><PlotOptions /></div>
      </div>
    </div>
  );
}

function StatusBar() {
  const items: [string, number, string, number, string, boolean?][] = [
    ["Data set:", 58, "CAP_nfle_normalized_combined", 219, "w-[307px]"],
    ["Observations:", 86, "73236", 41, "w-[156px]"],
    ["Size:", 28, "27 MB", 41, "w-[99px]"],
    ["Predictors:", 68, "48", 17, "w-[114px]", true],
    ["Response:", 66, "column_49", 73, "w-[168px]"],
    ["Response Classes:", 118, "2", 9, "w-[136px]", true],
  ];
  return (
    <div className="flex h-[30px] items-start bg-[#eae8ec] pl-[20px] pt-[4px] text-[12.400px] text-black">
      <div className="flex h-[23px] w-[988px] shrink-0 items-center border border-[#999] pl-[6px] pt-[4px] shadow-[1px_1px_0_#fff,inset_1px_1px_0_#fff]">
        {items.map(([k, kw, v, vw, c, link]) => (
          <div key={k} className={`flex shrink-0 gap-[5px] ${c}`}>
            <T w={kw}>{k}</T>
            <T w={vw} className={link ? "text-[#0b64cf] underline underline-offset-2" : "font-bold"}>{v}</T>
          </div>
        ))}
      </div>
      <div className="ml-[3px] flex h-[23px] grow items-center gap-[5px] border border-r-0 border-[#999] pl-[5px] pt-[4px] shadow-[inset_1px_1px_0_#fff]">
        <T w={67}>Validation:</T>
        <T w={169} className="font-bold">10-fold Cross-Validation</T>
      </div>
    </div>
  );
}

function MainWindow() {
  return (
    <div className="absolute left-[83px] top-[63px] flex h-[668px] w-[1260px] flex-col overflow-hidden rounded-t-[7px] bg-[#eae8ec] font-['DejaVu_Sans',sans-serif] shadow-[0_3px_16px_rgba(0,0,0,.65)]">
      <div className="flex h-[30px] shrink-0 items-center border-t border-[#6b6860] bg-gradient-to-b from-[#59564e] to-[#403f3a] pb-[2px] font-['Open_Sans','Noto_Sans',sans-serif] text-[14px] font-bold text-[#dfdbd2]">
        <T w={289} className="ml-[485px]">Classification Learner - Confusion Matrix</T>
        <div className="ml-auto flex pr-[5px]"><WinButtons active /></div>
      </div>
      <TabStrip />
      <Toolstrip />
      <div className="h-px shrink-0 bg-[#8e8e8e]" />
      <div className="flex h-[489px] shrink-0">
        <DataBrowser />
        <div className="w-[5px] shrink-0 bg-[#eae8ec]" />
        <Documents />
      </div>
      <StatusBar />
    </div>
  );
}

export default function App() {
  return (
    <div className="relative h-[768px] w-[1360px] overflow-hidden bg-gradient-to-b from-[#ea4f10] from-10% via-[#c63b18] via-65% to-[#9c211f]">
      <TopBar />
      <div className="flex w-[700px] bg-gradient-to-b from-[#981a38] via-[#7a0c40] to-[#3c0024]">
        <Dock />
      </div>
      <BackWindow />
      <MainWindow />
    </div>
  );
}
